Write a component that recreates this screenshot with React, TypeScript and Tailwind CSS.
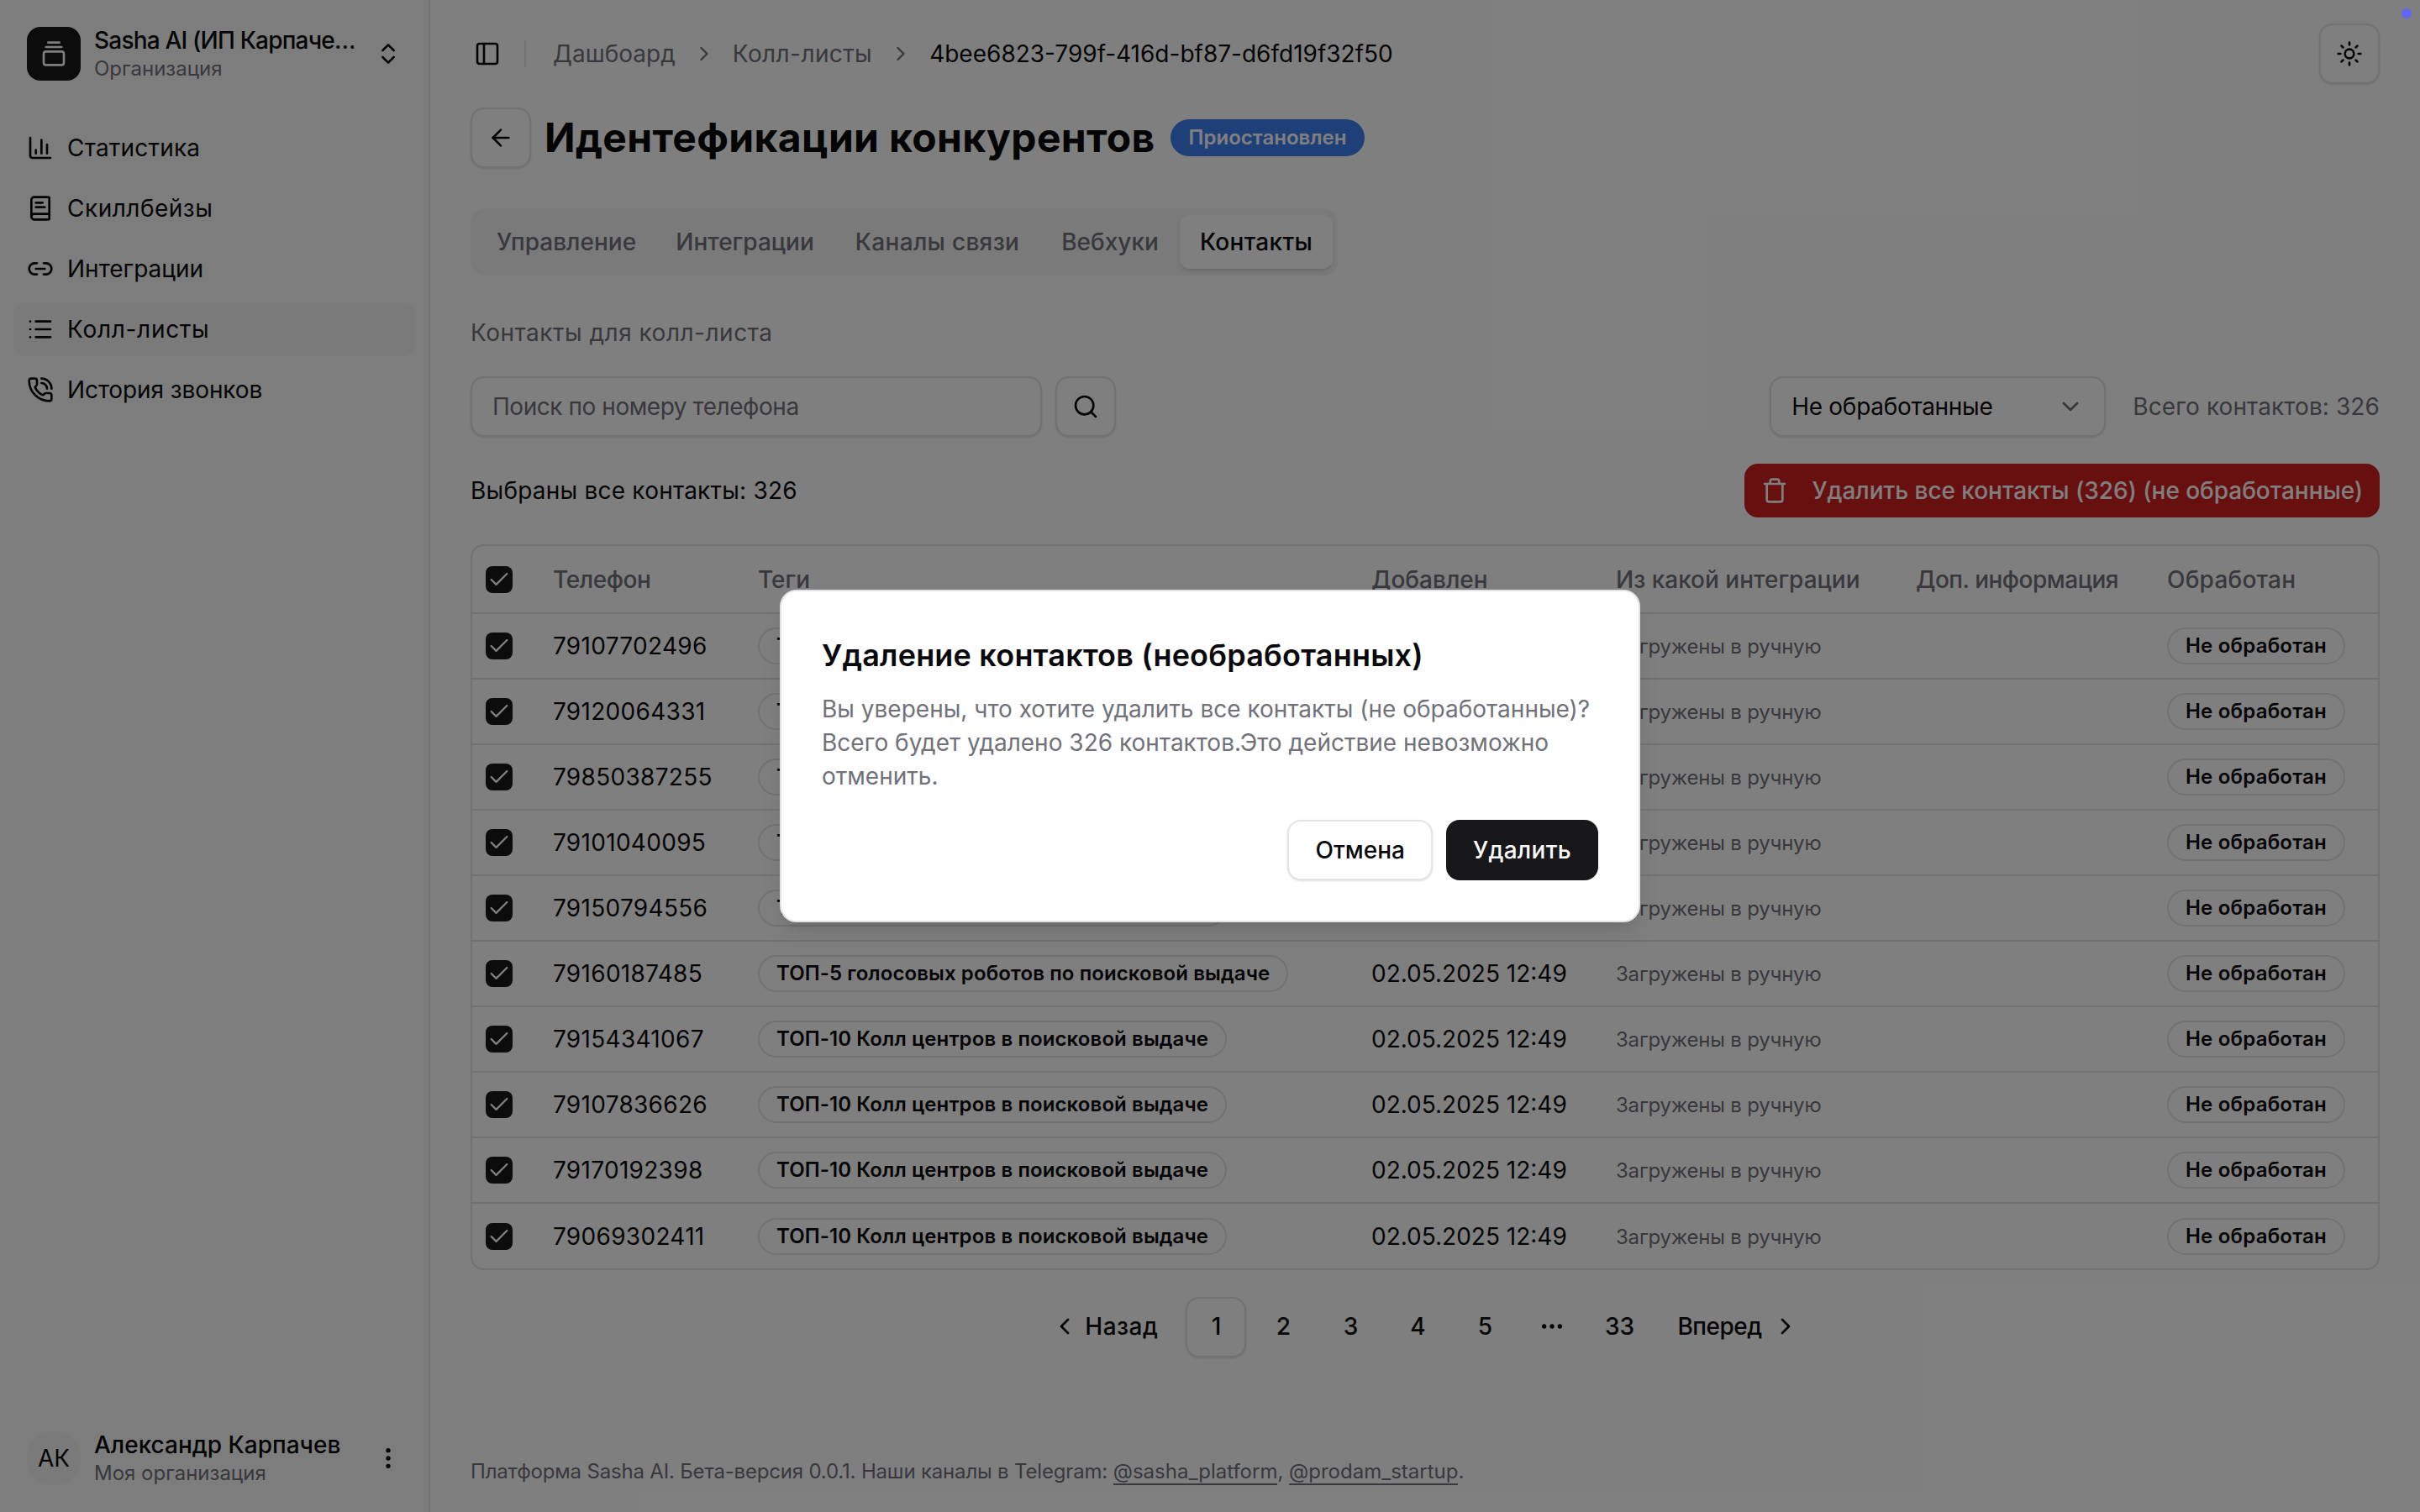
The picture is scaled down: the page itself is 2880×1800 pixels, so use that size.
import {
  ArrowLeft, BookText, ChartColumn, Check, ChevronDown, ChevronLeft, ChevronRight, ChevronsUpDown,
  Ellipsis, EllipsisVertical, GalleryVerticalEnd, Link2, List, PanelLeft, PhoneCall, Search, Sun, Trash,
} from 'lucide-react';

const navItems = [
  { label: 'Статистика', icon: ChartColumn, tracking: 'tracking-[0.2px]' },
  { label: 'Скиллбейзы', icon: BookText, tracking: 'tracking-[0.5px]' },
  { label: 'Интеграции', icon: Link2, tracking: '' },
  { label: 'Колл-листы', icon: List, tracking: 'tracking-[0.7px]', active: true },
  { label: 'История звонков', icon: PhoneCall, tracking: 'tracking-[-0.1px]' },
];

const tabs = [
  { label: 'Управление', width: 'w-[212px]' },
  { label: 'Интеграции', width: 'w-[213px]' },
  { label: 'Каналы связи', width: 'w-[245px] tracking-[0.3px]' },
  { label: 'Вебхуки', width: 'w-[166px]' },
];

const TOP5 = 'ТОП-5 голосовых роботов по поисковой выдаче';
const TOP10 = 'ТОП-10 Колл центров в поисковой выдаче';

const contacts = [
  { phone: '79107702496', tag: TOP10 },
  { phone: '79120064331', tag: TOP10 },
  { phone: '79850387255', tag: TOP10 },
  { phone: '79101040095', tag: TOP10 },
  { phone: '79150794556', tag: TOP10 },
  { phone: '79160187485', tag: TOP5 },
  { phone: '79154341067', tag: TOP10 },
  { phone: '79107836626', tag: TOP10 },
  { phone: '79170192398', tag: TOP10 },
  { phone: '79069302411', tag: TOP10 },
];

function Checkbox() {
  return (
    <div className="flex h-[32px] w-[32px] items-center justify-center rounded-[8px] bg-[#18181b] text-white">
      <Check size={28} strokeWidth={2} />
    </div>
  );
}

function Sidebar() {
  return (
    <aside className="flex h-full w-[512px] shrink-0 flex-col border-r-2 border-[#e4e4e7] bg-[#fafafa]">
      {/* Org switcher */}
      <div className="p-[16px]">
        <div className="flex h-[96px] items-center gap-[16px] px-[16px]">
          <div className="flex h-[64px] w-[64px] shrink-0 items-center justify-center rounded-[16px] bg-[#18181b] text-white">
            <GalleryVerticalEnd size={32} />
          </div>
          <div className="min-w-0 flex-1">
            <div className="truncate text-[28px] leading-[36px] font-medium tracking-[-0.8px] text-[#09090b]">Sasha AI (ИП Карпачев А.В.)</div>
            <div className="truncate text-[24px] leading-[32px] text-[#71717a]">Организация</div>
          </div>
          <ChevronsUpDown size={32} className="shrink-0 text-[#09090b]" />
        </div>
      </div>

      {/* Nav */}
      <nav className="flex flex-col gap-[8px] px-[16px] pt-[16px]">
        {navItems.map((item) => (
          <div
            key={item.label}
            className={`flex h-[64px] items-center gap-[16px] rounded-[16px] px-[16px] text-[28px] text-[#09090b] ${
              item.active ? 'bg-[#f4f4f5]' : ''
            }`}
          >
            <item.icon size={32} strokeWidth={2} />
            <span className={item.tracking}>{item.label}</span>
          </div>
        ))}
      </nav>

      {/* User */}
      <div className="mt-auto mb-[16px] flex h-[96px] items-center gap-[16px] px-[32px]">
        <div className="flex h-[64px] w-[64px] shrink-0 items-center justify-center rounded-full bg-[#f4f4f5] text-[28px] text-[#09090b]">
          АК
        </div>
        <div className="min-w-0 flex-1">
          <div className="truncate text-[28px] leading-[36px] font-medium text-[#09090b]">Александр Карпачев</div>
          <div className="truncate text-[24px] leading-[32px] text-[#71717a]">Моя организация</div>
        </div>
        <EllipsisVertical size={32} className="shrink-0 text-[#09090b]" />
      </div>
    </aside>
  );
}

function ContactsTable() {
  return (
    <div className="overflow-hidden rounded-[16px] border-2 border-[#e4e4e7]">
      <table className="w-full table-fixed border-collapse text-left">
        <colgroup>
          <col className="w-[80px]" />
          <col className="w-[244px]" />
          <col className="w-[730px]" />
          <col className="w-[291px]" />
          <col className="w-[357px]" />
          <col className="w-[299px]" />
          <col />
        </colgroup>
        <thead>
          <tr className="h-[80px] border-b-2 border-[#e4e4e7] text-[28px] font-medium text-[#71717a]">
            <th className="pl-[16px] font-medium"><Checkbox /></th>
            <th className="px-[16px] font-medium tracking-[-0.4px]">Телефон</th>
            <th className="px-[16px] font-medium">Теги</th>
            <th className="px-[16px] font-medium">Добавлен</th>
            <th className="px-[16px] font-medium">Из какой интеграции</th>
            <th className="px-[16px] font-medium tracking-[-0.5px]">Доп. информация</th>
            <th className="px-[16px] font-medium tracking-[0.2px]">Обработан</th>
          </tr>
        </thead>
        <tbody>
          {contacts.map((c, i) => (
            <tr key={c.phone} className={`h-[78px] ${i < contacts.length - 1 ? 'border-b-2 border-[#e4e4e7]' : ''}`}>
              <td className="pl-[16px]"><Checkbox /></td>
              <td className="px-[16px] text-[28px] tracking-[0.3px] text-[#09090b]">{c.phone}</td>
              <td className="px-[16px]">
                <span className="inline-flex h-[44px] items-center rounded-full border-2 border-[#e4e4e7] px-[20px] text-[24px] font-semibold tracking-[0.1px] whitespace-nowrap text-[#09090b]">
                  {c.tag}
                </span>
              </td>
              <td className="px-[16px] text-[28px] text-[#09090b]">02.05.2025 12:49</td>
              <td className="px-[16px] pt-[2px] text-[24px] tracking-[-0.2px] text-[#71717a]">Загружены в ручную</td>
              <td className="px-[16px]" />
              <td className="px-[16px]">
                <span className="inline-flex h-[44px] items-center rounded-full border-2 border-[#e4e4e7] px-[20px] text-[24px] font-semibold tracking-[0.2px] whitespace-nowrap text-[#09090b]">
                  Не обработан
                </span>
              </td>
            </tr>
          ))}
        </tbody>
      </table>
    </div>
  );
}

function Pagination() {
  const pageClass = 'flex h-[72px] w-[72px] items-center justify-center rounded-[16px] pb-[2px] text-[28px] font-medium text-[#09090b]';
  return (
    <div className="mt-[32px] flex items-center justify-center gap-[8px]">
      <div className="flex h-[72px] items-center gap-[8px] pr-[25px] pb-[2px] pl-[20px] text-[28px] font-medium text-[#09090b]">
        <ChevronLeft size={32} />
        <span className="tracking-[0.5px]">Назад</span>
      </div>
      <div className={`${pageClass} border-2 border-[#e4e4e7] shadow-sm`}>1</div>
      {['2', '3', '4', '5'].map((p) => (
        <div key={p} className={pageClass}>{p}</div>
      ))}
      <div className={pageClass}><Ellipsis size={32} /></div>
      <div className={pageClass}>33</div>
      <div className="flex h-[72px] items-center gap-[12px] pr-[20px] pb-[2px] pl-[25px] text-[28px] font-medium text-[#09090b]">
        <span className="tracking-[-0.5px]">Вперед</span>
        <ChevronRight size={32} />
      </div>
    </div>
  );
}

function ConfirmDialog() {
  return (
    <div className="absolute inset-0 flex items-center justify-center bg-black/50">
      <div className="flex w-[1024px] flex-col rounded-[20px] border-2 border-[#e4e4e7] bg-white p-[48px] shadow-[0_20px_30px_-6px_rgba(0,0,0,0.1),0_8px_12px_-8px_rgba(0,0,0,0.1)]">
        <h2 className="text-[36px] leading-[56px] font-semibold tracking-[0.2px] text-[#09090b]">Удаление контактов (необработанных)</h2>
        <p className="mt-[16px] text-[28px] leading-[40px] text-[#71717a]">
          Вы уверены, что хотите удалить все контакты (не обработанные)? Всего будет удалено 326 контактов.Это действие невозможно отменить.
        </p>
        <div className="mt-[32px] flex justify-end gap-[16px]">
          <div className="flex h-[72px] items-center rounded-[16px] border-2 border-[#e4e4e7] bg-white px-[31px] text-[28px] font-medium text-[#09090b] shadow-sm">
            Отмена
          </div>
          <div className="flex h-[72px] items-center rounded-[16px] bg-[#18181b] px-[32px] text-[28px] font-medium tracking-[0.3px] text-[#fafafa]">
            Удалить
          </div>
        </div>
      </div>
    </div>
  );
}

export default function App() {
  return (
    <div className="relative flex h-[1800px] w-[2880px] overflow-hidden bg-white [font-family:Inter,sans-serif]">
      <Sidebar />

      <main className="flex h-full min-w-0 flex-1 flex-col px-[48px]">
        {/* Top bar */}
        <header className="flex h-[128px] shrink-0 items-center text-[28px]">
          <PanelLeft size={32} className="ml-[4px] text-[#09090b]" />
          <div className="mr-[32px] ml-[28px] h-[32px] w-[2px] bg-[#e4e4e7]" />
          <div className="flex items-center gap-[20px] text-[#71717a]">
            <span>Дашбоард</span>
            <ChevronRight size={28} />
            <span className="tracking-[0.4px]">Колл-листы</span>
            <ChevronRight size={28} />
            <span className="text-[#09090b]">4bee6823-799f-416d-bf87-d6fd19f32f50</span>
          </div>
          <div className="ml-auto flex h-[72px] w-[72px] items-center justify-center rounded-[16px] border-2 border-[#e4e4e7] text-[#09090b] shadow-sm">
            <Sun size={32} />
          </div>
        </header>

        {/* Title */}
        <div className="flex h-[72px] shrink-0 items-center">
          <div className="flex h-[72px] w-[72px] items-center justify-center rounded-[16px] border-2 border-[#e4e4e7] text-[#09090b] shadow-sm">
            <ArrowLeft size={32} />
          </div>
          <h1 className="ml-[16px] text-[48px] font-bold tracking-[0.35px] text-[#09090b]">Идентефикации конкурентов</h1>
          <span className="ml-[18px] flex h-[44px] items-center rounded-full bg-[#3f7ef2] px-[22px] text-[24px] font-semibold text-white">
            Приостановлен
          </span>
        </div>

        {/* Tabs */}
        <div className="mt-[48px] flex h-[80px] w-[1032px] shrink-0 items-center rounded-[16px] bg-[#f4f4f5] py-[8px] pl-[8px] text-[28px] font-medium text-[#71717a]">
          {tabs.map((tab) => (
            <div key={tab.label} className={`${tab.width} shrink-0 text-center whitespace-nowrap`}>{tab.label}</div>
          ))}
          <div className="flex h-[64px] w-[182px] shrink-0 items-center justify-center rounded-[12px] bg-white tracking-[0.3px] text-[#09090b] shadow-md">Контакты</div>
        </div>

        <div className="mt-[48px] text-[28px] leading-[40px] tracking-[0.5px] text-[#71717a]">Контакты для колл-листа</div>

        {/* Filters */}
        <div className="mt-[32px] flex h-[72px] shrink-0 items-center">
          <div className="flex h-[72px] w-[680px] items-center rounded-[16px] border-2 border-[#e4e4e7] px-[24px] text-[28px] tracking-[-0.45px] text-[#71717a] shadow-sm">
            Поиск по номеру телефона
          </div>
          <div className="ml-[16px] flex h-[72px] w-[72px] items-center justify-center rounded-[16px] border-2 border-[#e4e4e7] text-[#09090b] shadow-sm">
            <Search size={32} />
          </div>
          <div className="ml-auto flex h-[72px] w-[400px] items-center justify-between rounded-[16px] border-2 border-[#e4e4e7] px-[24px] text-[28px] text-[#09090b] shadow-sm">
            <span className="tracking-[-0.3px]">Не обработанные</span>
            <ChevronDown size={32} className="text-[#71717a]" />
          </div>
          <span className="ml-[32px] text-[28px] tracking-[0.1px] text-[#71717a]">Всего контактов: 326</span>
        </div>

        {/* Selection */}
        <div className="mt-[32px] flex h-[64px] shrink-0 items-center justify-between">
          <span className="text-[28px] tracking-[0.22px] text-[#09090b]">Выбраны все контакты: 326</span>
          <div className="flex h-[64px] items-center gap-[28px] rounded-[16px] bg-[#d11f1f] px-[20px] text-[28px] font-medium tracking-[-0.05px] text-white">
            <Trash size={32} />
            <span>Удалить все контакты (326) (не обработанные)</span>
          </div>
        </div>

        <div className="mt-[32px]">
          <ContactsTable />
        </div>

        <Pagination />

        <footer className="mt-auto pb-[32px] text-[24px] leading-[32px] text-[#71717a]">
          <span className="tracking-[-0.18px]">Платформа Sasha AI. Бета-версия 0.0.1. Наши каналы в Telegram:</span>{' '}
          <span className="border-b-2 border-[#71717a]">@sasha_platform</span>,{' '}
          <span className="border-b-2 border-[#71717a]">@prodam_startup</span>.
        </footer>
      </main>

      <ConfirmDialog />

      <div className="absolute top-[10px] right-[10px] h-[12px] w-[12px] rounded-full bg-[#6666ff]" />
    </div>
  );
}
